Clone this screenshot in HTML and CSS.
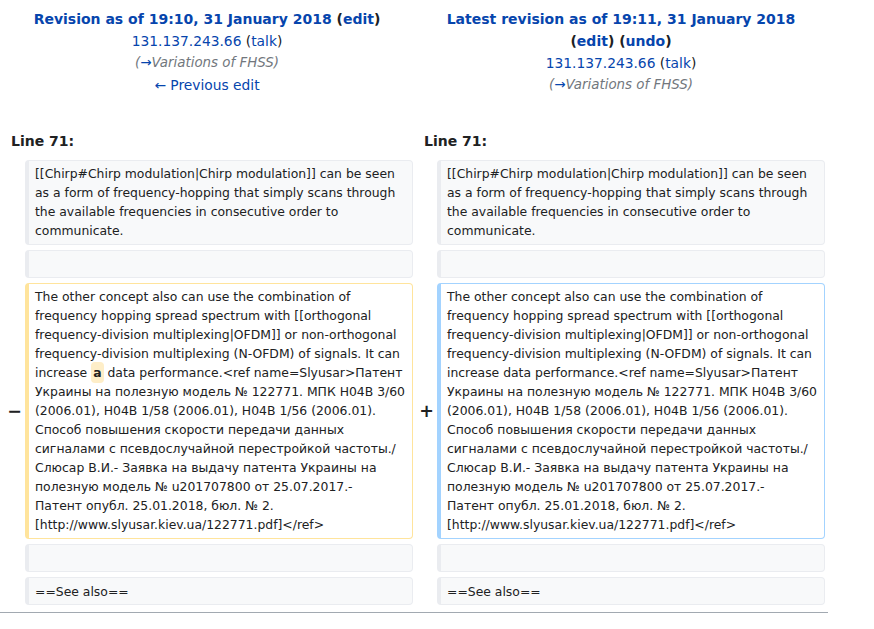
FILE: index.html
```html
<!DOCTYPE html>
<html lang="en">
<head>
<meta charset="utf-8">
<title>Frequency-hopping spread spectrum: Difference between revisions</title>
<link rel="stylesheet" href="styles.css">
</head>
<body>
<div class="page">
  <div class="diff-header">
    <div class="title-cell">
      <div class="title-line"><strong><a class="link" href="#">Revision as of 19:10, 31 January 2018</a> (<a class="link" href="#">edit</a>)</strong></div>
      <div class="user"><a class="link" href="#">131.137.243.66</a> (<a class="link" href="#">talk</a>)</div>
      <div class="summary">(<a class="link" href="#">→</a>Variations of FHSS)</div>
      <div class="user"><a class="link" href="#">← Previous edit</a></div>
    </div>
    <div class="title-cell">
      <div class="title-line"><strong><a class="link block" href="#">Latest revision as of 19:11, 31 January 2018</a> (<a class="link" href="#">edit</a>) (<a class="link" href="#">undo</a>)</strong></div>
      <div class="user"><a class="link" href="#">131.137.243.66</a> (<a class="link" href="#">talk</a>)</div>
      <div class="summary">(<a class="link" href="#">→</a>Variations of FHSS)</div>
    </div>
  </div>

  <div class="diff-body">
    <div class="row lineno-row">
      <div class="lineno">Line 71:</div>
      <div class="lineno">Line 71:</div>
    </div>

    <div class="row">
      <div class="marker"></div>
      <div class="box context">[[Chirp#Chirp modulation|Chirp modulation]] can be seen<br>as a form of frequency-hopping that simply scans through<br>the available frequencies in consecutive order to<br>communicate.</div>
      <div class="marker"></div>
      <div class="box context">[[Chirp#Chirp modulation|Chirp modulation]] can be seen<br>as a form of frequency-hopping that simply scans through<br>the available frequencies in consecutive order to<br>communicate.</div>
    </div>

    <div class="row">
      <div class="marker"></div>
      <div class="box context"><br></div>
      <div class="marker"></div>
      <div class="box context"><br></div>
    </div>

    <div class="row">
      <div class="marker">−</div>
      <div class="box deleted">The other concept also can use the combination of<br>frequency hopping spread spectrum with [[orthogonal<br>frequency-division multiplexing|OFDM]] or non-orthogonal<br>frequency-division multiplexing (N-OFDM) of signals. It can<br>increase <span class="change">a</span> data performance.&lt;ref name=Slyusar&gt;Патент<br>Украины на полезную модель № 122771. МПК H04B 3/60<br>(2006.01), H04B 1/58 (2006.01), H04B 1/56 (2006.01).<br>Способ повышения скорости передачи данных<br>сигналами с псевдослучайной перестройкой частоты./<br>Слюсар В.И.- Заявка на выдачу патента Украины на<br>полезную модель № u201707800 от 25.07.2017.-<br>Патент опубл. 25.01.2018, бюл. № 2.<br>[http://www.slyusar.kiev.ua/122771.pdf]&lt;/ref&gt;</div>
      <div class="marker">+</div>
      <div class="box added">The other concept also can use the combination of<br>frequency hopping spread spectrum with [[orthogonal<br>frequency-division multiplexing|OFDM]] or non-orthogonal<br>frequency-division multiplexing (N-OFDM) of signals. It can<br>increase data performance.&lt;ref name=Slyusar&gt;Патент<br>Украины на полезную модель № 122771. МПК H04B 3/60<br>(2006.01), H04B 1/58 (2006.01), H04B 1/56 (2006.01).<br>Способ повышения скорости передачи данных<br>сигналами с псевдослучайной перестройкой частоты./<br>Слюсар В.И.- Заявка на выдачу патента Украины на<br>полезную модель № u201707800 от 25.07.2017.-<br>Патент опубл. 25.01.2018, бюл. № 2.<br>[http://www.slyusar.kiev.ua/122771.pdf]&lt;/ref&gt;</div>
    </div>

    <div class="row">
      <div class="marker"></div>
      <div class="box context"><br></div>
      <div class="marker"></div>
      <div class="box context"><br></div>
    </div>

    <div class="row">
      <div class="marker"></div>
      <div class="box context">==See also==</div>
      <div class="marker"></div>
      <div class="box context">==See also==</div>
    </div>
  </div>
  <div class="rule"></div>
</div>
</body>
</html>
```
FILE: styles.css
```css
html, body {
  margin: 0;
  padding: 0;
  background: #ffffff;
}

body {
  font-family: "DejaVu Sans", sans-serif;
  color: #202122;
}

.page {
  width: 828px;
  padding-top: 8px;
}

.link {
  color: #0645ad;
  text-decoration: none;
}

.block {
  display: block;
}

.diff-header {
  display: grid;
  grid-template-columns: 414px 414px;
  font-size: 14px;
  line-height: 22px;
  text-align: center;
}

.user {
  font-size: 13.8px;
}

.summary {
  font-size: 13.4px;
  font-style: italic;
  color: #72777d;
}

.diff-body {
  display: flex;
  flex-direction: column;
  gap: 5px;
  margin-top: 34px;
}

.row {
  display: grid;
  grid-template-columns: 25px 388px 24px 388px;
}

.lineno-row {
  grid-template-columns: 413px 415px;
  margin-bottom: 3px;
}

.lineno {
  font-size: 14px;
  line-height: 22px;
  font-weight: bold;
  padding-left: 11px;
}

.marker {
  display: flex;
  align-items: center;
  justify-content: flex-end;
  padding-right: 3px;
  font-size: 17.5px;
  font-weight: bold;
  line-height: 1.2;
}

.box {
  font-size: 12.4px;
  line-height: 19px;
  padding: 3.2px 4px 3.9px 6px;
  border-style: solid;
  border-width: 1px 1px 1px 4px;
  border-radius: 4px;
  white-space: pre-wrap;
  word-wrap: break-word;
}

.context {
  background: #f8f9fa;
  border-color: #eaecf0;
  color: #202122;
}

.deleted {
  background: #ffffff;
  border-color: #ffe49c;
}

.added {
  background: #ffffff;
  border-color: #a3d3ff;
}

.change {
  background: #feeec8;
  font-weight: bold;
  border-radius: 4px;
  padding: 3px 2px;
}

.rule {
  margin-top: 7px;
  border-top: 1px solid #a2a9b1;
}
```
